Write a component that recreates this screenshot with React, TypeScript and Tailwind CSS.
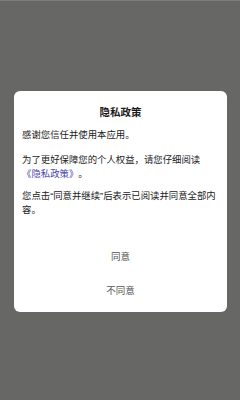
export default function App() {
  return (
    <div
      className="h-[400px] w-[240px] bg-[#676765] border-t border-[#7b7b79] pt-[90px] px-[14px]"
      style={{ fontFamily: '"Liberation Sans", "Noto Sans CJK SC", sans-serif' }}
    >
      <div className="w-[213px] h-[221px] bg-white rounded-[6px] flex flex-col">
        <div className="pt-[14px] h-[28px] text-center text-[10.5px] leading-[14px] font-bold text-[#1a1a1a]">
          隐私政策
        </div>
        <div className="px-[8px] pt-[9px] text-[9.4px] leading-[14px] text-[#222]">
          <p className="mb-[11px]">感谢您信任并使用本应用。</p>
          <p className="mb-[8px]">
            为了更好保障您的个人权益，请您仔细阅读
            <span className="inline-block text-[#4646ae]">《隐私政策》</span>。
          </p>
          <p>您点击“同意并继续”后表示已阅读并同意全部内容。</p>
        </div>
        <div className="mt-[23px] flex flex-col text-[9.5px] text-[#555]">
          <div className="h-[34px] flex items-center justify-center">同意</div>
          <div className="h-[34px] flex items-center justify-center">不同意</div>
        </div>
      </div>
    </div>
  );
}
